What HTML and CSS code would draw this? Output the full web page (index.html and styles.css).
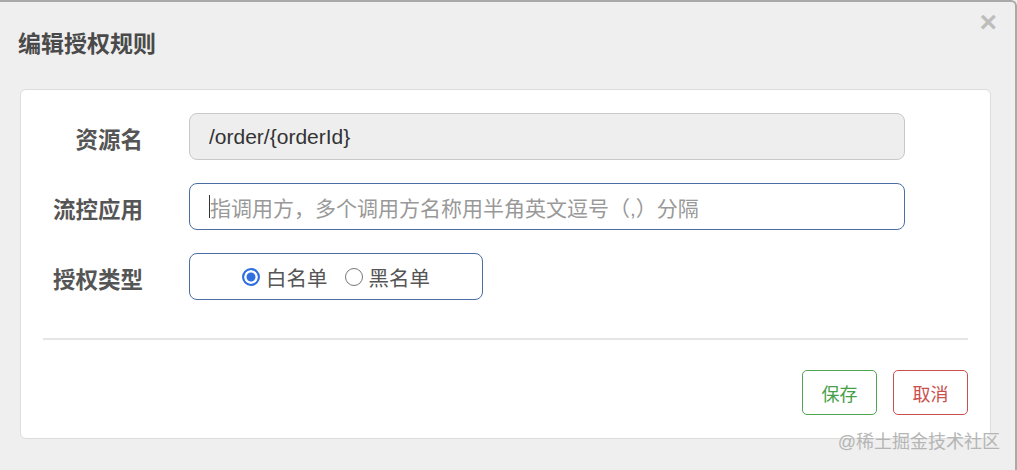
FILE: index.html
```html
<!DOCTYPE html>
<html lang="zh-CN">
  <head>
    <meta charset="UTF-8" />
    <meta name="viewport" content="width=device-width, initial-scale=1.0" />
    <title>编辑授权规则</title>
    <link rel="stylesheet" href="styles.css">
  </head>
  <body>
    <div class="modal">
      <div class="modal-header">
        <h1 class="modal-title">编辑授权规则</h1>
        <span class="close">&times;</span>
      </div>

      <div class="card">
        <div class="form">
          <div class="form-row">
            <label class="form-label">资源名</label>
            <input class="form-input" type="text" value="/order/{orderId}" disabled />
          </div>
          <div class="form-row">
            <label class="form-label">流控应用</label>
            <div class="form-input focused">
              <span class="caret"></span>
              <span class="placeholder">指调用方，多个调用方名称用半角英文逗号（,）分隔</span>
            </div>
          </div>
          <div class="form-row">
            <label class="form-label">授权类型</label>
            <div class="radio-group">
              <label class="radio"><span class="dot checked"></span>白名单</label>
              <label class="radio"><span class="dot"></span>黑名单</label>
            </div>
          </div>
        </div>

        <hr class="divider" />

        <div class="actions">
          <button class="btn btn-save">保存</button>
          <button class="btn btn-cancel">取消</button>
        </div>
      </div>

      <div class="watermark">@稀土掘金技术社区</div>
    </div>
  </body>
</html>
```

FILE: styles.css
```css
* {
  box-sizing: border-box;
}
html,
body {
  margin: 0;
  padding: 0;
}
body {
  width: 1017px;
  height: 470px;
  overflow: hidden;
  background: #efefef;
  font-family: "Liberation Sans", "Noto Sans CJK SC", sans-serif;
  color: #333;
}
.modal {
  position: relative;
  height: 470px;
  border-top: 2px solid #a9a9a9;
  border-right: 2px solid #a9a9a9;
  border-top-right-radius: 6px;
}
.modal-header {
  display: flex;
  justify-content: space-between;
  align-items: flex-start;
  height: 87px;
  padding: 0 18px 0 18px;
}
.modal-title {
  margin: 23px 0 0 0;
  font-size: 23px;
  font-weight: bold;
  color: #4a4a4a;
}
.close {
  margin-top: 5px;
  font-size: 30px;
  font-weight: bold;
  color: #bdbdbd;
  line-height: 1;
}
.card {
  margin: 0 24px 0 20px;
  height: 350px;
  background: #fff;
  border: 1px solid #ddd;
  border-radius: 6px;
  padding-top: 23px;
}
.form {
  display: flex;
  flex-direction: column;
  gap: 23px;
}
.form-row {
  display: flex;
  align-items: center;
  gap: 46px;
}
.form-label {
  width: 122px;
  padding-top: 3px;
  text-align: right;
  font-size: 22.5px;
  font-weight: bold;
  color: #555;
}
.form-input {
  display: flex;
  align-items: center;
  width: 716px;
  height: 47px;
  padding: 0 19px;
  border: 1px solid #c8c8c8;
  border-radius: 8px;
  background: #fff;
  font-family: inherit;
  font-size: 21px;
  color: #333;
}
.form-input:disabled {
  background: #eeeeee;
  color: #333;
}
.form-input.focused {
  border-color: #4a6ea3;
}
.caret {
  width: 1px;
  height: 23px;
  background: #333;
}
.placeholder {
  color: #999;
}
.radio-group {
  display: flex;
  align-items: center;
  justify-content: center;
  gap: 17px;
  width: 294px;
  height: 47px;
  border: 1px solid #4a6ea3;
  border-radius: 8px;
  font-size: 20.5px;
  color: #555;
}
.radio {
  display: flex;
  align-items: center;
  gap: 6px;
}
.dot {
  width: 18px;
  height: 18px;
  border: 1.5px solid #777;
  border-radius: 50%;
  background: #fff;
}
.dot.checked {
  border: 2px solid #2f6fe0;
  background: #2f6fe0;
  box-shadow: inset 0 0 0 2.5px #fff;
}
.divider {
  margin: 38px 22px 0 22px;
  border: none;
  border-top: 2px solid #e5e5e5;
}
.actions {
  display: flex;
  justify-content: flex-end;
  gap: 16px;
  margin: 30px 22px 0 0;
}
.btn {
  width: 75px;
  height: 45px;
  background: #fff;
  border: 1px solid;
  border-radius: 5px;
  font-family: inherit;
  font-size: 18px;
}
.btn-save {
  border-color: #4fa552;
  color: #45a048;
}
.btn-cancel {
  border-color: #c9504c;
  color: #c9504c;
}
.watermark {
  position: absolute;
  right: 15px;
  bottom: 17px;
  font-size: 18px;
  color: #b5b5b5;
}
```
